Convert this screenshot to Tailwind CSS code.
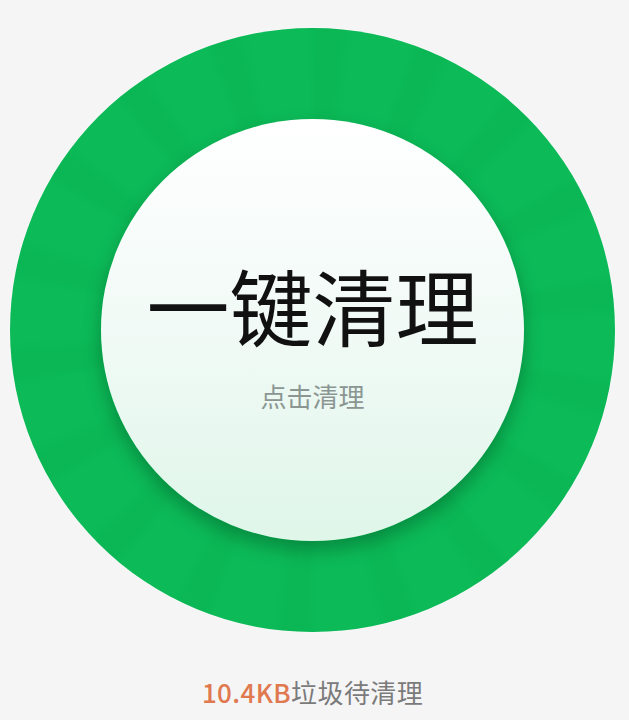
<!DOCTYPE html>
<html lang="zh-CN">
<head>
<meta charset="utf-8">
<script src="https://cdn.jsdelivr.net/npm/@tailwindcss/browser@4"></script>
</head>
<body class="m-0 bg-[#f5f5f6]">
<main class="relative w-[629px] h-[720px] overflow-hidden flex flex-col items-center pt-[28px] font-['Noto_Sans_CJK_SC','Noto_Sans',sans-serif]">
  <div class="ml-[-4px] w-[605px] h-[604px] shrink-0 rounded-full flex items-center justify-center bg-[repeating-conic-gradient(from_8deg,#0cba58_0deg,#0cba58_11deg,#0bb755_13deg,#0bb755_17deg,#0cba58_20deg)] shadow-[0_0_2px_#ffffff]">
    <div class="w-[423px] h-[422px] rounded-full flex flex-col items-center bg-gradient-to-b from-[#ffffff] via-[#f1faf6] to-[#dff6e9] shadow-[0_9px_18px_rgba(0,70,30,0.4)]">
      <div class="mt-[130px] text-[83px] leading-[110px] font-normal text-[#111111] whitespace-nowrap">一键清理</div>
      <div class="mt-[19px] text-[26px] leading-[36px] text-[#8b9692] whitespace-nowrap">点击清理</div>
    </div>
  </div>
  <div class="ml-[-4px] mt-[43px] text-[26px] leading-[34px] tracking-[0.4px] text-[#7b7b7b] whitespace-nowrap"><span class="text-[#e0794f] font-medium">10.4KB</span>垃圾待清理</div>
</main>
</body>
</html>
